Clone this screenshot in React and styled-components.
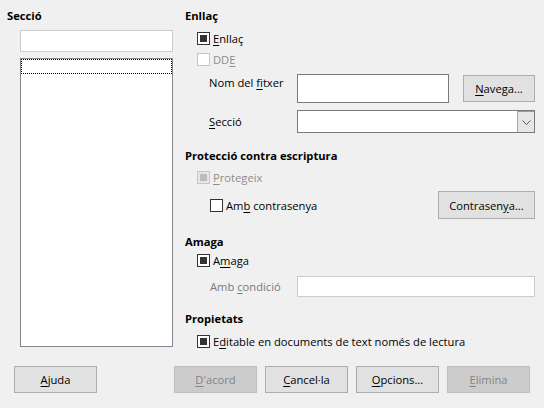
import React from 'react';
import styled, { createGlobalStyle } from 'styled-components';

const GlobalStyle = createGlobalStyle`
  html, body {
    margin: 0;
    padding: 0;
    background: #f0f0f0;
  }
  body {
    font-family: "Open Sans", "Noto Sans", sans-serif;
    font-size: 11.2px;
    color: #000;
  }
  u {
    text-underline-offset: 2px;
  }
`;

const Dialog = styled.div`
  width: 544px;
  height: 408px;
  display: flex;
  flex-direction: column;
  background: #f0f0f0;
  overflow: hidden;
`;

const Main = styled.div`
  display: flex;
  height: 366px;
`;

const LeftPane = styled.div`
  width: 173px;
  padding: 8px 0 0 7px;
  display: flex;
  flex-direction: column;
`;

const RightPane = styled.div`
  flex: 1;
  padding: 8px 9px 0 5px;
  display: flex;
  flex-direction: column;
`;

const Title = styled.div`
  font-weight: bold;
  line-height: 16px;
  margin-top: ${p => p.$top || 0}px;
`;

const TextInput = styled.div`
  box-sizing: border-box;
  width: ${p => p.$width}px;
  height: ${p => p.$height}px;
  margin-left: ${p => p.$left || 0}px;
  margin-top: ${p => p.$top || 0}px;
  background: #fff;
  border: 1px solid ${p => (p.$dark ? '#7a7a7a' : '#cbcbcb')};
  flex-shrink: 0;
`;

const ListBox = styled.div`
  box-sizing: border-box;
  width: 153px;
  height: 289px;
  margin: 6px 0 0 13px;
  background: #fff;
  border: 1px solid #828790;
`;

const ListRow = styled.div`
  height: 15px;
  outline: 1px dotted #000;
  outline-offset: -1px;
`;

const CheckRow = styled.div`
  display: flex;
  align-items: center;
  height: ${p => p.$height || 21}px;
  margin-top: ${p => p.$top || 0}px;
  padding-left: ${p => p.$indent || 12}px;
  color: ${p => (p.$disabled ? '#8c8c8c' : '#000')};
`;

const Box = styled.span`
  box-sizing: border-box;
  width: 13px;
  height: 13px;
  border: 1px solid ${p => (p.$disabled ? '#c6c6c6' : '#333')};
  background: ${p => (p.$disabled && p.$checked ? '#e6e6e6' : '#fff')};
  display: flex;
  align-items: center;
  justify-content: center;
  margin-right: 3px;
  flex-shrink: 0;

  &::after {
    content: '';
    display: ${p => (p.$checked ? 'block' : 'none')};
    width: 7px;
    height: 7px;
    background: ${p => (p.$disabled ? '#bcbcbc' : '#333')};
  }
`;

const FieldRow = styled.div`
  display: flex;
  align-items: ${p => p.$align || 'center'};
  margin-top: ${p => p.$top || 0}px;
`;

const FieldLabel = styled.div`
  box-sizing: border-box;
  width: 112px;
  padding-left: ${p => p.$indent || 24}px;
  line-height: 16px;
  margin-top: ${p => p.$shift || 0}px;
  color: ${p => (p.$disabled ? '#7a7a7a' : '#000')};
`;

const Spacer = styled.div`
  flex: 1;
`;

const Button = styled.div`
  box-sizing: border-box;
  width: ${p => p.$width || 83}px;
  height: ${p => p.$height || 27}px;
  margin-left: ${p => p.$left || 0}px;
  margin-top: ${p => p.$top || 0}px;
  display: flex;
  align-items: center;
  justify-content: center;
  flex-shrink: 0;
  background: ${p => (p.$disabled ? '#cccccc' : '#e1e1e1')};
  border: 1px solid ${p => (p.$disabled ? '#bfbfbf' : '#adadad')};
  color: ${p => (p.$disabled ? '#838383' : '#000')};
`;

const Select = styled.div`
  box-sizing: border-box;
  width: 238px;
  height: 23px;
  display: flex;
  justify-content: flex-end;
  background: #fff;
  border: 1px solid #7a7a7a;
`;

const DropButton = styled.div`
  box-sizing: border-box;
  width: 17px;
  height: 100%;
  display: flex;
  align-items: center;
  justify-content: center;
  background: #e6e6e6;
  border: 1px solid #9a9a9a;
  border-width: 1px 0 0 1px;
  border-left-color: #a6a6a6;
`;

const Footer = styled.div`
  display: flex;
  justify-content: space-between;
  padding: 0 14px;
`;

const ButtonGroup = styled.div`
  display: flex;
  gap: 8px;
`;

function Check({ checked, disabled, children, ...rest }) {
  return (
    <CheckRow $disabled={disabled} {...rest}>
      <Box $checked={checked} $disabled={disabled} />
      <span>{children}</span>
    </CheckRow>
  );
}

export default function App() {
  return (
    <Dialog>
      <GlobalStyle />
      <Main>
        <LeftPane>
          <Title>Secció</Title>
          <TextInput $width={153} $height={22} $left={13} $top={6} />
          <ListBox>
            <ListRow />
          </ListBox>
        </LeftPane>

        <RightPane>
          <Title>Enllaç</Title>
          <Check checked $top={4}>
            <u>E</u>nllaç
          </Check>
          <Check disabled>
            DD<u>E</u>
          </Check>

          <FieldRow $align="flex-start" $top={4}>
            <FieldLabel $shift={1}>
              Nom del <u>f</u>itxer
            </FieldLabel>
            <TextInput $dark $width={152} $height={29} />
            <Button $width={72} $left={14} $top={1}>
              <span>
                <u>N</u>avega...
              </span>
            </Button>
          </FieldRow>

          <FieldRow $top={7}>
            <FieldLabel>
              <u>S</u>ecció
            </FieldLabel>
            <Select>
              <DropButton>
                <svg width="9" height="5" viewBox="0 0 9 5">
                  <polyline points="0.5,0.5 4.5,4.5 8.5,0.5" fill="none" stroke="#555" strokeWidth="1" />
                </svg>
              </DropButton>
            </Select>
          </FieldRow>

          <Title $top={15}>Protecció contra escriptura</Title>
          <Check checked disabled $top={3}>
            <u>P</u>rotegeix
          </Check>
          <CheckRow $indent={25} $height={28} $top={3}>
            <Box />
            <span>
              Am<u>b</u> contrasenya
            </span>
            <Spacer />
            <Button $width={97} $height={28}>
              <span>
                Contrasen<u>y</u>a...
              </span>
            </Button>
          </CheckRow>

          <Title $top={15}>Amaga</Title>
          <Check checked>
            A<u>m</u>aga
          </Check>
          <FieldRow $top={5}>
            <FieldLabel $indent={25} $disabled>
              Amb <u>c</u>ondició
            </FieldLabel>
            <TextInput $width={238} $height={21} />
          </FieldRow>

          <Title $top={14}>Propietats</Title>
          <Check checked $top={4}>
            E<u>d</u>itable en documents de text només de lectura
          </Check>
        </RightPane>
      </Main>

      <Footer>
        <Button>
          <span>
            <u>A</u>juda
          </span>
        </Button>
        <ButtonGroup>
          <Button $disabled>
            <span>
              <u>D</u>'acord
            </span>
          </Button>
          <Button>
            <span>
              <u>C</u>ancel·la
            </span>
          </Button>
          <Button>
            <span>
              <u>O</u>pcions...
            </span>
          </Button>
          <Button $disabled>
            <span>
              <u>E</u>limina
            </span>
          </Button>
        </ButtonGroup>
      </Footer>
    </Dialog>
  );
}
